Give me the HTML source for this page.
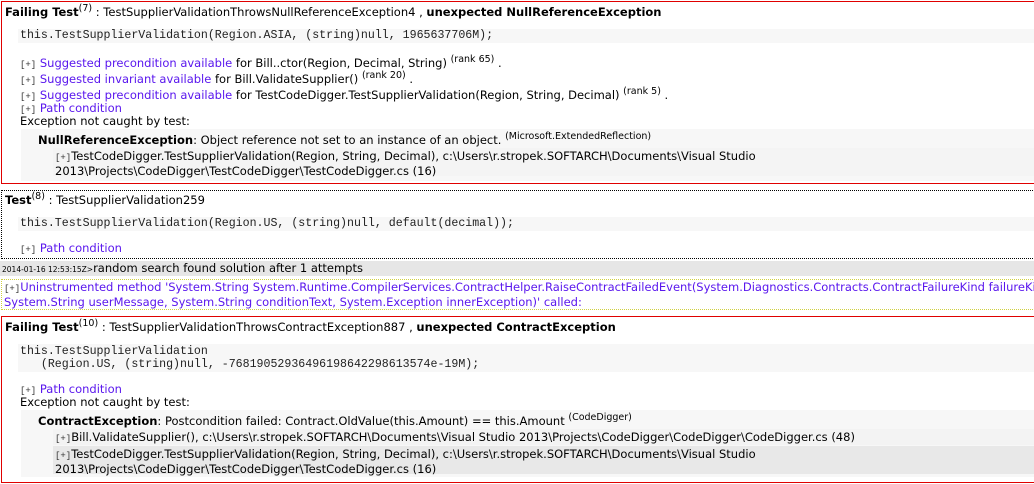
<!DOCTYPE html>
<html><head><meta charset="utf-8"><style>
*{margin:0;padding:0;box-sizing:border-box}
body{width:1034px;height:484px;overflow:hidden;background:#fff;font-family:"DejaVu Sans",Verdana,sans-serif;font-size:11.5px;color:#000;position:relative}
.a{position:absolute;white-space:nowrap;line-height:13px}
.m{font-family:"Liberation Mono",monospace;font-size:11.6px;color:#222}
.l{color:#5a17ee}
.p{font-family:"Liberation Mono",monospace;font-size:9px;color:#333}
sup{font-size:9.5px;vertical-align:5px;line-height:0}
.bg{position:absolute}
.red{position:absolute;border:1px solid #e00000;border-right:none}
b{font-weight:bold}
</style></head><body>
<div class="red" style="left:1px;top:1px;width:1040px;height:183px;border-right:1px solid #e00000"></div>
<div class="a" style="left:5px;top:6px"><b>Failing Test</b><sup>(7)</sup> : TestSupplierValidationThrowsNullReferenceException4 , <b>unexpected NullReferenceException</b></div>
<div class="bg" style="left:18px;top:29px;width:1016px;height:14px;background:#f7f7f7"></div>
<div class="a m" style="left:20px;top:29px">this.TestSupplierValidation(Region.ASIA, (string)null, 1965637706M);</div>
<div class="a" style="left:20px;top:57px"><span class="p">[+]</span> <span class="l">Suggested precondition available</span> for Bill..ctor(Region, Decimal, String) <sup>(rank 65)</sup> .</div>
<div class="a" style="left:20px;top:73px"><span class="p">[+]</span> <span class="l">Suggested invariant available</span> for Bill.ValidateSupplier() <sup>(rank 20)</sup> .</div>
<div class="a" style="left:20px;top:89px"><span class="p">[+]</span> <span class="l">Suggested precondition available</span> for TestCodeDigger.TestSupplierValidation(Region, String, Decimal) <sup>(rank 5)</sup> .</div>
<div class="a" style="left:20px;top:102px"><span class="p">[+]</span> <span class="l">Path condition</span></div>
<div class="a" style="left:20px;top:115px">Exception not caught by test:</div>
<div class="bg" style="left:21px;top:129px;width:1013px;height:52px;background:#f7f7f7"></div>
<div class="a" style="left:38px;top:134px"><b>NullReferenceException</b>: Object reference not set to an instance of an object. <sup>(Microsoft.ExtendedReflection)</sup></div>
<div class="bg" style="left:53px;top:148px;width:981px;height:28px;background:#f4f4f4"></div>
<div class="a" style="left:55px;top:150px"><span class="p">[+]</span>TestCodeDigger.TestSupplierValidation(Region, String, Decimal), c:\Users\r.stropek.SOFTARCH\Documents\Visual Studio<br>2013\Projects\CodeDigger\TestCodeDigger\TestCodeDigger.cs (16)</div>

<div class="bg" style="left:1px;top:190px;width:1040px;height:69px;border:1px dotted #000"></div>
<div class="a" style="left:5px;top:194px"><b>Test</b><sup>(8)</sup> : TestSupplierValidation259</div>
<div class="bg" style="left:18px;top:217px;width:1016px;height:14px;background:#f7f7f7"></div>
<div class="a m" style="left:20px;top:217px">this.TestSupplierValidation(Region.US, (string)null, default(decimal));</div>
<div class="a" style="left:20px;top:242px"><span class="p">[+]</span> <span class="l">Path condition</span></div>

<div class="bg" style="left:0;top:261px;width:1034px;height:15px;background:#e6e6e6"></div>
<div class="a" style="left:2px;top:262px"><span style="font-size:7.5px">2014-01-16 12:53:15Z&gt;</span>random search found solution after 1 attempts</div>
<div class="bg" style="left:1px;top:279px;width:1040px;height:31px;border:1px dotted #d0d040"></div>
<div class="a l" style="left:4px;top:281px"><span class="p">[+]</span>Uninstrumented method 'System.String System.Runtime.CompilerServices.ContractHelper.RaiseContractFailedEvent(System.Diagnostics.Contracts.ContractFailureKind failureKind,<br>System.String userMessage, System.String conditionText, System.Exception innerException)' called:</div>

<div class="red" style="left:1px;top:316px;width:1040px;height:167px;border-right:1px solid #e00000"></div>
<div class="a" style="left:5px;top:321px"><b>Failing Test</b><sup>(10)</sup> : TestSupplierValidationThrowsContractException887 , <b>unexpected ContractException</b></div>
<div class="bg" style="left:18px;top:344px;width:1016px;height:28px;background:#f7f7f7"></div>
<div class="a m" style="left:20px;top:345px">this.TestSupplierValidation<br>&nbsp;&nbsp;&nbsp;(Region.US, (string)null, -76819052936496198642298613574e-19M);</div>
<div class="a" style="left:20px;top:383px"><span class="p">[+]</span> <span class="l">Path condition</span></div>
<div class="a" style="left:20px;top:396px">Exception not caught by test:</div>
<div class="bg" style="left:21px;top:410px;width:1013px;height:67px;background:#f7f7f7"></div>
<div class="a" style="left:38px;top:415px"><b>ContractException</b>: Postcondition failed: Contract.OldValue(this.Amount) == this.Amount <sup>(CodeDigger)</sup></div>
<div class="bg" style="left:53px;top:429px;width:981px;height:16px;background:#f3f3f3"></div>
<div class="a" style="left:55px;top:431px"><span class="p">[+]</span>Bill.ValidateSupplier(), c:\Users\r.stropek.SOFTARCH\Documents\Visual Studio 2013\Projects\CodeDigger\CodeDigger\CodeDigger.cs (48)</div>
<div class="bg" style="left:53px;top:446px;width:981px;height:28px;background:#e8e8e8"></div>
<div class="a" style="left:55px;top:448px"><span class="p">[+]</span>TestCodeDigger.TestSupplierValidation(Region, String, Decimal), c:\Users\r.stropek.SOFTARCH\Documents\Visual Studio<br>2013\Projects\CodeDigger\TestCodeDigger\TestCodeDigger.cs (16)</div>
</body></html>
